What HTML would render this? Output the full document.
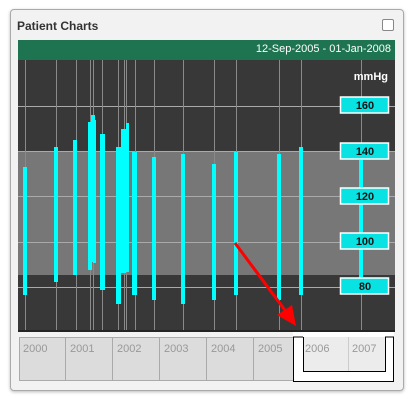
<!DOCTYPE html><html><head><style>
body{margin:0;width:408px;height:402px;background:#fff;font-family:"Liberation Sans",sans-serif;position:relative;overflow:hidden}
.p{position:absolute;left:10px;top:9px;width:392px;height:380px;border:1px solid #aaa;border-radius:4px;background:#f2f2f2;box-shadow:0 1px 3px #bbb}
.a{position:absolute}
</style></head><body>
<div class="p"></div>
<div class="a" style="left:17px;top:19px;font-size:12px;font-weight:bold;color:#333">Patient Charts</div>
<div class="a" style="left:382px;top:19px;width:10px;height:10px;border:1px solid #888;border-radius:2px;background:#fff"></div>
<div class="a" style="left:18px;top:40px;width:377px;height:20px;background:#1e7450;color:#fff;font-size:11px;text-align:right;line-height:19px;box-sizing:border-box;padding-right:4px">12-Sep-2005 - 01-Jan-2008</div>
<svg class="a" style="left:0;top:0" width="408" height="402">
<rect x="18" y="60" width="377" height="272" fill="#383838"/>
<rect x="18" y="151" width="377" height="124" fill="#777"/>
<g stroke="#aaa" stroke-width="1">
<line x1="18" x2="395" y1="106.5" y2="106.5"/><line x1="18" x2="395" y1="151.5" y2="151.5"/><line x1="18" x2="395" y1="196.5" y2="196.5"/><line x1="18" x2="395" y1="242.5" y2="242.5"/><line x1="18" x2="395" y1="287.5" y2="287.5"/>
<g stroke="#8a8a8a">
<line x1="25.5" x2="25.5" y1="60" y2="330"/><line x1="56.5" x2="56.5" y1="60" y2="330"/><line x1="76.5" x2="76.5" y1="60" y2="330"/><line x1="90.5" x2="90.5" y1="60" y2="330"/><line x1="93.5" x2="93.5" y1="60" y2="330"/><line x1="102.5" x2="102.5" y1="60" y2="330"/><line x1="118.5" x2="118.5" y1="60" y2="330"/><line x1="124.5" x2="124.5" y1="60" y2="330"/><line x1="126.5" x2="126.5" y1="60" y2="330"/><line x1="135.5" x2="135.5" y1="60" y2="330"/><line x1="154.5" x2="154.5" y1="60" y2="330"/><line x1="183.5" x2="183.5" y1="60" y2="330"/><line x1="214.5" x2="214.5" y1="60" y2="330"/><line x1="236.5" x2="236.5" y1="60" y2="330"/><line x1="279.5" x2="279.5" y1="60" y2="330"/><line x1="301.5" x2="301.5" y1="60" y2="330"/><line x1="361.5" x2="361.5" y1="60" y2="330"/>
</g></g>
<g fill="#0ff">
<rect x="23" y="167" width="4" height="128"/><rect x="54" y="147" width="4" height="135"/><rect x="73" y="140" width="4" height="135"/>
<rect x="88" y="122" width="4" height="148"/><rect x="91" y="115" width="4" height="147"/><rect x="93" y="120" width="3" height="143"/>
<rect x="100" y="134" width="5" height="156"/><rect x="116" y="147" width="5" height="157"/><rect x="121" y="129" width="5" height="144"/><rect x="126" y="123" width="3" height="149"/>
<rect x="132" y="152" width="5" height="143"/><rect x="152" y="157" width="4" height="143"/><rect x="181" y="154" width="4" height="150"/>
<rect x="212" y="164" width="4" height="136"/><rect x="234" y="152" width="4" height="143"/><rect x="277" y="154" width="4" height="146"/><rect x="299" y="147" width="4" height="148"/>
<rect x="359" y="160" width="4" height="120"/>
</g>
<line x1="18" x2="395" y1="331" y2="331" stroke="#111"/>
<text x="388" y="80" fill="#fff" font-size="11" font-weight="bold" text-anchor="end" font-family="Liberation Sans">mmHg</text>
<g font-family="Liberation Sans" font-size="11" font-weight="bold" text-anchor="middle" fill="#111">
<g stroke="#fff" stroke-width="1.5" fill="#08e2e2"><rect x="340.5" y="97" width="48" height="16"/><rect x="340.5" y="143" width="48" height="16"/><rect x="340.5" y="188" width="48" height="16"/><rect x="340.5" y="233" width="48" height="16"/><rect x="340.5" y="278" width="48" height="16"/></g>
<text x="365" y="109">160</text><text x="365" y="155">140</text><text x="365" y="200">120</text><text x="365" y="245">100</text><text x="365" y="290">80</text>
</g>
<rect x="18" y="332" width="377" height="50" fill="#f2f2f2"/>
<g fill="#dcdcdc" stroke="#aaa"><rect x="19.5" y="337.5" width="46" height="43"/><rect x="65.5" y="337.5" width="47" height="43"/><rect x="112.5" y="337.5" width="47" height="43"/><rect x="159.5" y="337.5" width="47" height="43"/><rect x="206.5" y="337.5" width="47" height="43"/><rect x="253.5" y="337.5" width="40" height="43"/></g>
<rect x="293" y="332" width="101" height="50" fill="#fff"/>
<rect x="303" y="337" width="82" height="35" fill="#ececec"/>
<line x1="348.5" x2="348.5" y1="337" y2="372" stroke="#ccc"/>
<path d="M293.5 337V381.5H393.5V337M303.5 337V371.5H385.5V337M293 337H303M385 337H394" stroke="#000" fill="none"/>
<g font-family="Liberation Sans" font-size="11" fill="#999"><text x="23" y="352">2000</text><text x="70" y="352">2001</text><text x="117" y="352">2002</text><text x="164" y="352">2003</text><text x="211" y="352">2004</text><text x="258" y="352">2005</text><text x="305" y="352">2006</text><text x="352" y="352">2007</text></g>
<line x1="235" y1="243" x2="287" y2="313" stroke="#f00" stroke-width="3"/>
<polygon points="296,326 277,315 292,305" fill="#f00"/>
</svg>
</body></html>
